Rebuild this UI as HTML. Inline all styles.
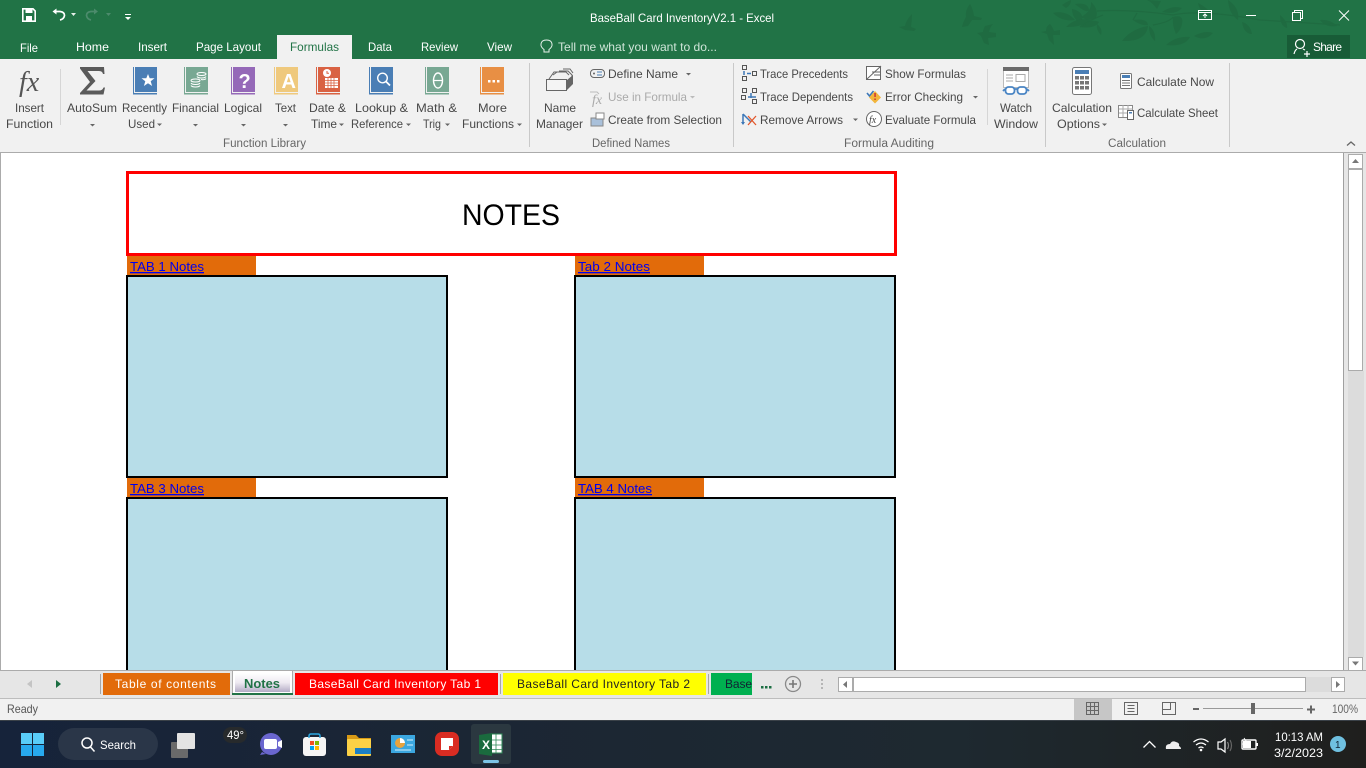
<!DOCTYPE html>
<html lang="en"><head><meta charset="utf-8"><title>BaseBall Card InventoryV2.1 - Excel</title>
<style>
html,body{margin:0;padding:0;background:#fff;overflow:hidden;width:1366px;height:768px}
svg{display:block;position:absolute;left:0;top:0}
text{font-family:"Liberation Sans",Arial,sans-serif;font-size:12px;fill:#484848}
.w text,text.w{fill:#fff}
.g{fill:#666;font-size:11.5px}
.l{fill:#0000ee;font-size:13px;text-decoration:underline}
.t{font-size:12px}
</style></head><body>
<svg width="1366" height="768" viewBox="0 0 1366 768" xmlns="http://www.w3.org/2000/svg">
<!-- title bar -->
<rect width="1366" height="59" fill="#217346"/>
<g fill="#1f6b41">
<path d="M912 14Q906 20 905 26L899 27L905 30L914 31L916 29L911 27Q912 20 912 14Z"/>
<path d="M970 4Q965 10 966 17Q963 22 962 27L968 26L972 20L981 20L982 18L974 16Q973 9 970 4Z"/>
<path d="M993 24L985 26Q983 30 983 32L977 33L981 36L984 43L989 45L988 38L996 37L996 33L989 32Q990 27 993 24Z"/>
<path d="M1050 24Q1046 26 1046 31L1041 32L1047 34L1049 40L1054 45L1053 35L1060 35L1060 30L1054 31Q1052 26 1050 24Z"/>
<path d="M1053 13Q1066 10 1075 20Q1062 22 1053 13Z"/>
<path d="M1062 5Q1068 1 1071 0Q1071 5 1066 8Z"/>
<path d="M1075 4Q1088 2 1089 10Q1087 14 1075 4Z"/>
<path d="M1072 9Q1086 12 1081 24Q1072 18 1072 9Z"/>
<path d="M1091 2Q1099 9 1096 18Q1089 22 1081 17Q1092 11 1091 2Z"/>
<path d="M1066 27Q1076 17 1090 20Q1084 27 1066 27Z"/>
<path d="M1080 27Q1090 18 1099 22Q1095 29 1080 27Z"/>
<path d="M1097 24Q1103 29 1101 35Q1096 30 1097 24Z"/>
<path d="M1133 20Q1147 18 1148 25Q1141 26 1133 20Z"/>
<path d="M1122 41Q1131 29 1148 26Q1146 42 1122 41Z"/>
<path d="M1149 26Q1156 31 1155 41Q1149 36 1149 26Z"/>
<path d="M1162 12Q1172 5 1182 8Q1176 15 1162 12Z"/>
<path d="M1173 17Q1184 14 1182 24Q1181 30 1176 34Q1172 25 1173 17Z"/>
<path d="M1166 45Q1176 36 1190 37Q1185 47 1166 45Z"/>
<path d="M1147 0L1161 1L1157 9Q1152 2 1147 0Z"/>
<path d="M1228 0Q1240 8 1238 20Q1229 14 1228 0Z"/>
<path d="M1194 36Q1205 30 1213 33Q1205 42 1194 36Z"/>
<path d="M1198 3Q1208 8 1212 15Q1201 16 1198 3Z"/>
<path d="M1242 22Q1250 24 1252 34Q1244 34 1242 22Z"/>
<path d="M1280 15Q1288 22 1287 28Q1280 26 1280 15Z"/>
<path d="M1320 20Q1330 19 1337 26Q1326 28 1320 20Z"/>
</g>
<g fill="none" stroke="#1f6b41" stroke-width="1.200"><path d="M1097 11Q1130 9 1173 15Q1200 9 1260 20L1340 25"/><path d="M1080 27Q1090 20 1103 15"/><path d="M1153 25Q1170 22 1173 17"/><path d="M1133 20L1137 13"/></g>
<!-- QAT -->
<path d="M22.800 8.800H33L35.200 11V21.200H22.800Z" fill="none" stroke="#fff" stroke-width="1.600"/><rect x="25.500" y="9" width="7" height="4" fill="#fff"/><rect x="26" y="16" width="6" height="5" fill="#fff"/>
<path d="M52.500 11.500L56.500 8.500V14.500Z" fill="#fff"/><path d="M56 11.500H60Q64.500 12 64.500 15.500Q64 19 60 20" fill="none" stroke="#fff" stroke-width="1.700"/>
<path d="M71 13H76L73.500 16Z" fill="#e6f0ea"/>
<path d="M98 11.500L94 8.500V14.500Z" fill="#4c8b6c"/><path d="M95 11.500H91Q86.500 12 86.500 15.500Q87 19 91 20" fill="none" stroke="#4c8b6c" stroke-width="1.700"/>
<path d="M106 13H111L108.500 16Z" fill="#4c8b6c"/>
<rect x="125" y="14" width="6" height="1" fill="#fff"/><path d="M125 17H131L128 20Z" fill="#fff"/>
<text x="590" y="22" textLength="184" lengthAdjust="spacingAndGlyphs" class="w">BaseBall Card InventoryV2.1 - Excel</text>
<!-- window controls -->
<g fill="none" stroke="#fff" stroke-width="1"><rect x="1198.500" y="10.500" width="13" height="9"/><path d="M1198 12.500H1212M1205 18V14M1203 16L1205 14L1207 16"/><path d="M1246 15.500H1256"/><rect x="1292.500" y="12.500" width="8" height="8"/><path d="M1294.500 12V10.500H1302.500V18.500H1301"/><path d="M1339 10.500L1349 20.500M1349 10.500L1339 20.500"/></g>
<!-- tabs -->
<g class="w">
<text x="20" y="52" textLength="18" lengthAdjust="spacingAndGlyphs">File</text>
<text x="76" y="51" textLength="33" lengthAdjust="spacingAndGlyphs">Home</text>
<text x="138" y="51" textLength="29" lengthAdjust="spacingAndGlyphs">Insert</text>
<text x="196" y="51" textLength="65" lengthAdjust="spacingAndGlyphs">Page Layout</text>
<text x="368" y="51" textLength="24" lengthAdjust="spacingAndGlyphs">Data</text>
<text x="421" y="51" textLength="37" lengthAdjust="spacingAndGlyphs">Review</text>
<text x="487" y="51" textLength="25" lengthAdjust="spacingAndGlyphs">View</text>
</g>
<text x="558" y="51" textLength="159" lengthAdjust="spacingAndGlyphs" style="fill:#cfe5d8">Tell me what you want to do...</text>
<path d="M544 49.500Q540.500 47 541 44Q541.500 40 546.500 40Q551.500 40 552 44Q552.500 47 549 49.500V52H544Z" fill="none" stroke="#e6f0ea" stroke-width="1"/>
<rect x="1287" y="35" width="63" height="23" fill="#185c37"/>
<text x="1313" y="51" textLength="29" lengthAdjust="spacing" class="w">Share</text>
<g fill="none" stroke="#fff" stroke-width="1.200"><circle cx="1300" cy="44" r="4.500"/><path d="M1294 54Q1295 50 1297 49M1303 49L1305 50M1304 54H1310M1307 51V57"/></g>
<!-- ribbon -->
<rect y="59" width="1366" height="93" fill="#f1f1f1"/>
<rect x="277" y="35" width="75" height="24" fill="#f1f1f1"/>
<text x="290" y="51" textLength="49" lengthAdjust="spacingAndGlyphs" style="fill:#217346">Formulas</text>
<rect y="152" width="1366" height="1" fill="#ababab"/>
<g fill="#d6d6d6"><rect x="60" y="69" width="1" height="56"/><rect x="987" y="69" width="1" height="56"/></g>
<g fill="#c9c9c9"><rect x="529" y="63" width="1" height="84"/><rect x="733" y="63" width="1" height="84"/><rect x="1045" y="63" width="1" height="84"/><rect x="1229" y="63" width="1" height="84"/></g>
<!-- fx -->
<text x="19" y="91" style="font:italic 28px 'Liberation Serif',serif;fill:#555">fx</text>
<path d="M80 67H104L104.500 74H103Q102.500 71 99 71H87.500L95.500 81L86.500 90.500H99Q102.500 90.500 103.500 87.500H105L103.500 94.500H80V93L90 82L80 68.500Z" fill="#5a5a5a"/>
<!-- books -->
<g>
<path d="M133 67h1v26h23v1.500h-24z" fill="#4a7eb5"/><rect x="135" y="67" width="22" height="25" fill="#4a7eb5"/>
<path d="M148 74l1.700 4.300h4.800l-3.800 3 1.400 4.700-4.100-2.800-4.100 2.800 1.400-4.700-3.800-3h4.800z" fill="#fff"/>
<path d="M184 67h1v26h23v1.500h-24z" fill="#78a893"/><rect x="186" y="67" width="22" height="25" fill="#78a893"/>
<g fill="none" stroke="#fff"><ellipse cx="195.500" cy="80.500" rx="4.500" ry="1.500"/><path d="M191 83c1 2 8 2 9 0M191 85.500c1 2 8 2 9 0"/><ellipse cx="201.500" cy="74" rx="4.500" ry="1.500"/><path d="M197 76.500c1 2 8 2 9 0M201 79.500c2 .5 4.500 0 5-1"/></g>
<path d="M231 67h1v26h23v1.500h-24z" fill="#9569b8"/><rect x="233" y="67" width="22" height="25" fill="#9569b8"/>
<text x="238.500" y="88" style="font:bold 20px 'Liberation Sans',sans-serif;fill:#fff">?</text>
<path d="M274 67h1v26h23v1.500h-24z" fill="#efc97d"/><rect x="276" y="67" width="22" height="25" fill="#efc97d"/>
<text x="281.500" y="88" style="font:bold 20px 'Liberation Sans',sans-serif;fill:#fff">A</text>
<path d="M316 67h1v26h23v1.500h-24z" fill="#d96243"/><rect x="318" y="67" width="22" height="25" fill="#d96243"/>
<circle cx="327" cy="73" r="4" fill="#fff"/><path d="M327 71v2.300h2" stroke="#d96243" fill="none"/>
<rect x="325" y="78" width="13" height="10" fill="#fff"/><path d="M325 80.500h13M325 83h13M325 85.500h13M328 78v10M331 78v10M334 78v10" stroke="#d96243" stroke-width=".8"/>
<path d="M369 67h1v26h23v1.500h-24z" fill="#4a7eb5"/><rect x="371" y="67" width="22" height="25" fill="#4a7eb5"/>
<circle cx="382.500" cy="78" r="4.800" fill="none" stroke="#fff" stroke-width="1.400"/><path d="M386 81.500l4 4" stroke="#fff" stroke-width="1.800"/>
<path d="M425 67h1v26h23v1.500h-24z" fill="#78a893"/><rect x="427" y="67" width="22" height="25" fill="#78a893"/>
<ellipse cx="438" cy="80.500" rx="4.500" ry="7.500" fill="none" stroke="#fff" stroke-width="1.400"/><path d="M433.500 80.500h9" stroke="#fff" stroke-width="1.200"/>
<path d="M480 67h1v26h23v1.500h-24z" fill="#e88f44"/><rect x="482" y="67" width="22" height="25" fill="#e88f44"/>
<g fill="#fff"><rect x="488" y="80" width="2.500" height="2.500"/><rect x="492.500" y="80" width="2.500" height="2.500"/><rect x="497" y="80" width="2.500" height="2.500"/></g>
</g>
<!-- big labels -->
<text x="15" y="112" textLength="29" lengthAdjust="spacingAndGlyphs">Insert</text>
<text x="6" y="128" textLength="47" lengthAdjust="spacingAndGlyphs">Function</text>
<text x="67" y="112" textLength="50" lengthAdjust="spacingAndGlyphs">AutoSum</text>
<text x="122" y="112" textLength="45" lengthAdjust="spacingAndGlyphs">Recently</text>
<text x="128" y="128" textLength="27" lengthAdjust="spacingAndGlyphs">Used</text>
<text x="172" y="112" textLength="47" lengthAdjust="spacingAndGlyphs">Financial</text>
<text x="224" y="112" textLength="38" lengthAdjust="spacingAndGlyphs">Logical</text>
<text x="275" y="112" textLength="21" lengthAdjust="spacingAndGlyphs">Text</text>
<text x="309" y="112" textLength="37" lengthAdjust="spacingAndGlyphs">Date &amp;</text>
<text x="311" y="128" textLength="26" lengthAdjust="spacingAndGlyphs">Time</text>
<text x="355" y="112" textLength="53" lengthAdjust="spacingAndGlyphs">Lookup &amp;</text>
<text x="351" y="128" textLength="52" lengthAdjust="spacingAndGlyphs">Reference</text>
<text x="416" y="112" textLength="41" lengthAdjust="spacingAndGlyphs">Math &amp;</text>
<text x="423" y="128" textLength="18" lengthAdjust="spacingAndGlyphs">Trig</text>
<text x="478" y="112" textLength="29" lengthAdjust="spacingAndGlyphs">More</text>
<text x="462" y="128" textLength="52" lengthAdjust="spacingAndGlyphs">Functions</text>
<g fill="#666">
<path d="M90 124h5l-2.500 2.500z"/><path d="M157 123.500h5l-2.500 2.500z"/><path d="M193 124h5l-2.500 2.500z"/><path d="M241 124h5l-2.500 2.500z"/><path d="M283 124h5l-2.500 2.500z"/><path d="M339 123.500h5l-2.500 2.500z"/><path d="M406 123.500h5l-2.500 2.500z"/><path d="M445 123.500h5l-2.500 2.500z"/><path d="M517 123.500h5l-2.500 2.500z"/><path d="M686 73h5l-2.500 2.500z"/><path d="M853 118.500h5l-2.500 2.500z"/><path d="M973 96h5l-2.500 2.500z"/><path d="M1102 123.500h5l-2.500 2.500z"/>
</g>
<path d="M690 96h5l-2.500 2.500z" fill="#bbb"/>
<text x="223" y="147" textLength="83" lengthAdjust="spacingAndGlyphs" class="g">Function Library</text>
<text x="592" y="147" textLength="78" lengthAdjust="spacingAndGlyphs" class="g">Defined Names</text>
<text x="844" y="147" textLength="90" lengthAdjust="spacingAndGlyphs" class="g">Formula Auditing</text>
<text x="1108" y="147" textLength="58" lengthAdjust="spacingAndGlyphs" class="g">Calculation</text>
<path d="M1347 145.500l4-3.500 4 3.500" fill="none" stroke="#666" stroke-width="1.300"/>
<!-- name manager -->
<g fill="none" stroke="#666"><path d="M549 79l5-7h12l3 3"/><path d="M553 75l4-3M559 71h9l4 4v6"/><path d="M563 69h7l3 4"/></g>
<rect x="546.500" y="79.500" width="20" height="11" fill="#f4f4f4" stroke="#666"/><path d="M567 80l6-5v9l-6 6z" fill="#666"/>
<text x="544" y="112" textLength="32" lengthAdjust="spacingAndGlyphs">Name</text>
<text x="536" y="128" textLength="47" lengthAdjust="spacingAndGlyphs">Manager</text>
<rect x="590.500" y="69.500" width="14" height="8" rx="3.500" fill="none" stroke="#666"/><path d="M597 72h5M597 75h5" stroke="#4a7eb5"/><circle cx="594" cy="73.500" r="1" fill="#666"/>
<text x="608" y="78" textLength="70" lengthAdjust="spacingAndGlyphs">Define Name</text>
<text x="592" y="104" style="font:italic 14px 'Liberation Serif',serif;fill:#aaa">fx</text>
<path d="M590 92h7l2 2" fill="none" stroke="#bbb"/>
<text x="608" y="101" textLength="79" lengthAdjust="spacingAndGlyphs" style="fill:#aaa">Use in Formula</text>
<rect x="591" y="118" width="12" height="8" fill="#a9c0da" stroke="#888"/><rect x="596" y="113" width="8" height="6" fill="#fff" stroke="#888"/>
<text x="608" y="124" textLength="114" lengthAdjust="spacingAndGlyphs">Create from Selection</text>
<!-- auditing -->
<g fill="none" stroke="#555"><rect x="742.500" y="65.500" width="4" height="4"/><rect x="742.500" y="76.500" width="4" height="4"/><rect x="752.500" y="71.500" width="4" height="4"/><rect x="742.500" y="88.500" width="4" height="4"/><rect x="752.500" y="99.500" width="4" height="4"/><rect x="752.500" y="88.500" width="4" height="4"/><rect x="741.500" y="95.500" width="4" height="4"/></g>
<path d="M744 71v4M747 73.500h4" stroke="#3d78b8" stroke-width="1.500"/>
<path d="M751 93v5M748 97h8" stroke="#3d78b8" stroke-width="1.500"/>
<text x="760" y="78" textLength="88" lengthAdjust="spacingAndGlyphs">Trace Precedents</text>
<text x="760" y="101" textLength="93" lengthAdjust="spacingAndGlyphs">Trace Dependents</text>
<path d="M743 114v10M743 114l8 8" stroke="#3d78b8" stroke-width="1.500" fill="none"/><path d="M748 116l8 9M756 116l-8 9" stroke="#e2572b" stroke-width="1.300"/><path d="M741 122h4l-2 3z" fill="#3d78b8"/>
<text x="760" y="124" textLength="83" lengthAdjust="spacingAndGlyphs">Remove Arrows</text>
<rect x="866.500" y="66.500" width="14" height="13" fill="#fff" stroke="#666"/><path d="M867 79l14-13M872 72h8M874 75h6" stroke="#666" fill="none"/>
<text x="885" y="78" textLength="81" lengthAdjust="spacingAndGlyphs">Show Formulas</text>
<path d="M867 93l2.500 3 4-5" stroke="#3d78b8" stroke-width="1.600" fill="none"/><path d="M875 91l6 6.500-6 6-6-6z" fill="#f2b53c"/><rect x="874.300" y="93" width="1.500" height="4" fill="#c33"/><rect x="874.300" y="98.500" width="1.500" height="1.500" fill="#c33"/>
<text x="885" y="101" textLength="78" lengthAdjust="spacingAndGlyphs">Error Checking</text>
<circle cx="874" cy="119" r="7.500" fill="#fff" stroke="#666"/><text x="869" y="123" style="font:italic 10px 'Liberation Serif',serif;fill:#444">fx</text>
<text x="885" y="124" textLength="91" lengthAdjust="spacingAndGlyphs">Evaluate Formula</text>
<!-- watch -->
<rect x="1003.500" y="67.500" width="25" height="20" fill="#fff" stroke="#bbb"/><rect x="1003" y="67" width="26" height="4" fill="#6b6b6b"/><rect x="1016" y="74.500" width="9" height="7" fill="none" stroke="#aaa"/><path d="M1006 75h7M1006 78h7M1006 81h7" stroke="#aaa"/>
<g fill="#fff" stroke="#4a85c4" stroke-width="1.800"><rect x="1005.500" y="87" width="9" height="7" rx="3"/><rect x="1017.500" y="87" width="9" height="7" rx="3"/><path d="M1014 89h4M1005 89l-2 2M1027 89l2 2"/></g>
<text x="1000" y="112" textLength="32" lengthAdjust="spacingAndGlyphs">Watch</text>
<text x="994" y="128" textLength="44" lengthAdjust="spacingAndGlyphs">Window</text>
<!-- calc -->
<rect x="1072.500" y="67.500" width="19" height="27" rx="2" fill="#fff" stroke="#777"/><rect x="1075" y="70" width="14" height="4" fill="#4a7eb5"/>
<g fill="#777"><rect x="1075" y="76" width="4" height="3.500"/><rect x="1080" y="76" width="4" height="3.500"/><rect x="1085" y="76" width="4" height="3.500"/><rect x="1075" y="81" width="4" height="3.500"/><rect x="1080" y="81" width="4" height="3.500"/><rect x="1085" y="81" width="4" height="3.500"/><rect x="1075" y="86" width="4" height="3.500"/><rect x="1080" y="86" width="4" height="3.500"/><rect x="1085" y="86" width="4" height="3.500"/></g>
<text x="1052" y="112" textLength="60" lengthAdjust="spacingAndGlyphs">Calculation</text>
<text x="1057" y="128" textLength="43" lengthAdjust="spacingAndGlyphs">Options</text>
<rect x="1120.500" y="73.500" width="11" height="15" rx="1" fill="#fff" stroke="#777"/><rect x="1122" y="75" width="8" height="3" fill="#4a7eb5"/><path d="M1122 80.500h8M1122 83h8M1122 85.500h8" stroke="#777"/>
<text x="1137" y="86" textLength="77" lengthAdjust="spacingAndGlyphs">Calculate Now</text>
<rect x="1118.500" y="105.500" width="14" height="12" fill="#fff" stroke="#888"/><path d="M1119 109h14M1119 113h14M1123 105v12M1128 105v12" stroke="#aaa"/><rect x="1127.500" y="110.500" width="6" height="9" fill="#fff" stroke="#666"/><rect x="1129" y="112" width="3" height="1.500" fill="#4a7eb5"/>
<text x="1137" y="117" textLength="81" lengthAdjust="spacingAndGlyphs">Calculate Sheet</text>
<!-- sheet -->
<rect x="0" y="153" width="1343" height="518" fill="#fff"/>
<rect x="0" y="153" width="1" height="518" fill="#ababab"/>
<rect x="1343" y="153" width="1" height="518" fill="#a0a0a0"/>
<rect x="1344" y="153" width="22" height="518" fill="#e6e6e6"/>
<rect x="1348" y="371" width="16" height="286" fill="#dcdcdc"/>
<rect x="1348.500" y="154.500" width="14" height="14" fill="#fff" stroke="#ababab"/><path d="M1352 163h7l-3.500-4z" fill="#777"/>
<rect x="1348.500" y="169.500" width="14" height="201" fill="#fff" stroke="#ababab"/>
<rect x="1348.500" y="657.500" width="14" height="13" fill="#fff" stroke="#ababab"/><path d="M1352 661.500h7l-3.500 4z" fill="#777"/>
<!-- content -->
<rect x="127.500" y="172.500" width="768" height="82" fill="#fff" stroke="#f00" stroke-width="3"/>
<text x="462" y="225" textLength="98" lengthAdjust="spacingAndGlyphs" style="font-size:30px;fill:#000">NOTES</text>
<g fill="#e26b0a"><rect x="127" y="256" width="129" height="19"/><rect x="575" y="256" width="129" height="19"/><rect x="127" y="478" width="129" height="19"/><rect x="575" y="478" width="129" height="19"/></g>
<text x="130" y="271" textLength="74" lengthAdjust="spacingAndGlyphs" class="l">TAB 1 Notes</text>
<text x="578" y="271" textLength="72" lengthAdjust="spacingAndGlyphs" class="l">Tab 2 Notes</text>
<text x="130" y="493" textLength="74" lengthAdjust="spacingAndGlyphs" class="l">TAB 3 Notes</text>
<text x="578" y="493" textLength="74" lengthAdjust="spacingAndGlyphs" class="l">TAB 4 Notes</text>
<g fill="#b7dde8" stroke="#000" stroke-width="2">
<rect x="127" y="276" width="320" height="201"/><rect x="575" y="276" width="320" height="201"/>
<rect x="127" y="498" width="320" height="200"/><rect x="575" y="498" width="320" height="200"/>
</g>
<!-- tab strip -->
<rect y="670" width="1366" height="29" fill="#e6e6e6"/>
<rect y="670" width="1366" height="1" fill="#ababab"/>
<rect y="698" width="1366" height="1" fill="#bdbdbd"/>
<path d="M32 680v8l-5-4z" fill="#c4c4c4"/><path d="M56 680v8l5-4z" fill="#1b6e42"/>
<g fill="#a6a6a6"><rect x="100" y="674" width="1" height="20"/><rect x="500" y="674" width="1" height="20"/><rect x="708" y="674" width="1" height="20"/></g>
<rect x="103" y="673" width="127" height="22" fill="#e26b0a"/>
<text x="115" y="688" textLength="101" lengthAdjust="spacing" class="t" style="fill:#fff">Table of contents</text>
<rect x="232.500" y="670.500" width="60" height="24" fill="#fff" stroke="#ababab"/>
<defs><linearGradient id="nt" x1="0" y1="0" x2="0" y2="1"><stop offset="0" stop-color="#fff"/><stop offset=".5" stop-color="#eeeaf2"/><stop offset="1" stop-color="#b4acc6"/></linearGradient>
<linearGradient id="tb" x1="0" y1="0" x2="1" y2="0"><stop offset="0" stop-color="#16233a"/><stop offset=".35" stop-color="#1b2634"/><stop offset=".7" stop-color="#1e2930"/><stop offset="1" stop-color="#1f1f1d"/></linearGradient></defs>
<rect x="235" y="673" width="55" height="19" fill="url(#nt)"/>
<rect x="232" y="693" width="61" height="2" fill="#217346"/>
<text x="244" y="688" textLength="36" lengthAdjust="spacingAndGlyphs" style="font-size:13px;font-weight:bold;fill:#217346">Notes</text>
<rect x="295" y="673" width="203" height="22" fill="#f00"/>
<text x="309" y="688" textLength="172" lengthAdjust="spacing" class="t" style="fill:#fff">BaseBall Card Inventory Tab 1</text>
<rect x="503" y="673" width="203" height="22" fill="#ff0"/>
<text x="517" y="688" textLength="173" lengthAdjust="spacing" class="t" style="fill:#222">BaseBall Card Inventory Tab 2</text>
<rect x="711" y="673" width="41" height="22" fill="#00b050"/>
<text x="725" y="688" textLength="27" lengthAdjust="spacing" class="t" style="fill:#123">Base</text>
<g fill="#1b6e42"><rect x="761" y="686" width="2.500" height="2.500"/><rect x="765" y="686" width="2.500" height="2.500"/><rect x="769" y="686" width="2.500" height="2.500"/></g>
<circle cx="793" cy="684" r="7.500" fill="none" stroke="#8a8a8a" stroke-width="1.300"/><path d="M789 684h8M793 680v8" stroke="#777" stroke-width="1.600"/>
<g fill="#b5b5b5"><rect x="821" y="679" width="2" height="2"/><rect x="821" y="683" width="2" height="2"/><rect x="821" y="687" width="2" height="2"/></g>
<rect x="838.500" y="677.500" width="14" height="14" fill="#fff" stroke="#ababab"/><path d="M847 681v7l-4-3.500z" fill="#777"/>
<rect x="853.500" y="677.500" width="452" height="14" fill="#fff" stroke="#ababab"/>
<rect x="1306" y="677" width="25" height="15" fill="#dcdcdc"/>
<rect x="1331.500" y="677.500" width="13" height="14" fill="#fff" stroke="#ababab"/><path d="M1336 681v7l4-3.500z" fill="#777"/>
<!-- status -->
<rect y="699" width="1366" height="21" fill="#f1f1f1"/>
<text x="7" y="713" textLength="31" lengthAdjust="spacingAndGlyphs" style="fill:#555">Ready</text>
<rect x="1074" y="699" width="38" height="21" fill="#c6c6c6"/>
<g fill="none" stroke="#666"><path d="M1086.500 702.500h12v12h-12zM1086.500 706.500h12M1086.500 710.500h12M1090.500 702.500v12M1094.500 702.500v12"/><rect x="1124.500" y="702.500" width="13" height="12"/><path d="M1127.500 705.500h7M1127.500 708.500h7M1127.500 711.500h7"/><path d="M1162.500 702.500h13v12h-13zM1170.500 702.500v7h-8"/></g>
<rect x="1193" y="708" width="6" height="2" fill="#666"/>
<rect x="1203" y="708" width="100" height="1" fill="#999"/>
<rect x="1251" y="703" width="4" height="11" fill="#666"/>
<path d="M1307 709.500h8M1311 705.500v8" stroke="#666" stroke-width="2"/>
<text x="1332" y="713" textLength="26" lengthAdjust="spacingAndGlyphs" style="fill:#666">100%</text>
<!-- taskbar -->
<rect y="720" width="1366" height="48" fill="url(#tb)"/>
<rect y="720" width="1366" height="1" fill="#3a4148"/>
<g><rect x="21" y="733" width="11" height="11" fill="#59cdf9"/><rect x="33" y="733" width="11" height="11" fill="#59cdf9"/><rect x="21" y="745" width="11" height="11" fill="#27a9ee"/><rect x="33" y="745" width="11" height="11" fill="#27a9ee"/></g>
<rect x="58" y="728" width="100" height="32" rx="16" fill="#2a3648"/>
<circle cx="87" cy="743" r="5" fill="none" stroke="#fff" stroke-width="1.500"/><path d="M90.500 747l4 4.500" stroke="#fff" stroke-width="1.500"/>
<text x="100" y="749" textLength="36" lengthAdjust="spacingAndGlyphs" class="w">Search</text>
<rect x="171" y="742" width="17" height="16" rx="1" fill="#6a6a6a"/><rect x="177" y="733" width="18" height="16" rx="1" fill="#e3e3e3"/>
<rect x="223" y="727" width="24" height="16" rx="8" fill="#272a2c"/>
<text x="227" y="739" textLength="17" lengthAdjust="spacingAndGlyphs" class="w">49°</text>
<circle cx="271" cy="744" r="11" fill="#6a66cf"/><path d="M262 752l-2 3 6-1z" fill="#6a66cf"/><rect x="264" y="739" width="13" height="10" rx="2" fill="#fff"/><path d="M278 742l4-2v8l-4-2z" fill="#fff"/>
<rect x="303" y="737" width="23" height="19" rx="3" fill="#f5f5f5"/><path d="M309 738v-2q0-2 2-2h7q2 0 2 2v2" fill="none" stroke="#2ba6e0" stroke-width="1.500"/>
<rect x="310" y="741" width="4" height="4" fill="#f25022"/><rect x="315" y="741" width="4" height="4" fill="#7fba00"/><rect x="310" y="746" width="4" height="4" fill="#00a4ef"/><rect x="315" y="746" width="4" height="4" fill="#ffb900"/>
<path d="M347 735h9l3 3h12v8h-24z" fill="#d89a16"/><rect x="347" y="739" width="24" height="17" rx="1" fill="#fcd146"/><rect x="355" y="748" width="16" height="6" fill="#1c7fc4"/>
<rect x="391" y="735" width="24" height="18" fill="#3ba7e0"/><circle cx="400" cy="743" r="5" fill="#e8a33d"/><path d="M400 743v-5a5 5 0 0 1 5 5z" fill="#fff"/><path d="M407 740h6M407 745h6M395 750h16" stroke="#d7f0fb"/>
<rect x="435" y="732" width="24" height="24" rx="7" fill="#d92c22"/><path d="M441 738h12v8l-4 4h-8z" fill="#fff"/><path d="M449 750v-4h4z" fill="#d92c22"/>
<rect x="471" y="724" width="40" height="40" rx="3" fill="#2b3840"/>
<rect x="490" y="734" width="12" height="19" fill="#fff" stroke="#2f8a58"/><path d="M490 740h12M490 745h12M490 749.500h12M496 734v19" stroke="#2f8a58" stroke-width=".8"/>
<path d="M479 735l13-2v23l-13-2z" fill="#1a6b3e"/>
<text x="482" y="749" style="font:bold 12px 'Liberation Sans',sans-serif;fill:#fff">X</text>
<rect x="483" y="760" width="16" height="3" rx="1.500" fill="#7cc4e6"/>
<!-- tray -->
<path d="M1143.500 747.500l6-6 6 6" fill="none" stroke="#fff" stroke-width="1.300"/>
<path d="M1166 749q-1-5 4-5q2-4 6-2q4 1 3 4q2 1 2 3z" fill="#eee"/>
<g fill="none" stroke="#fff" stroke-width="1.200"><path d="M1193.500 742q7.500-6 15 0M1196 745q5-4 10 0M1198.500 748q2.500-2 5 0"/><path d="M1218 742h3l4-3v13l-4-3h-3z"/><path d="M1227.500 742q2 3.500 0 7" stroke="#888"/><path d="M1230 740q3 5.500 0 11" stroke="#666"/></g>
<circle cx="1201" cy="750" r="1.300" fill="#fff"/>
<rect x="1242" y="740" width="14" height="9" rx="1" fill="none" stroke="#fff" stroke-width="1.400"/><rect x="1256.500" y="743" width="1.500" height="3" fill="#fff"/><path d="M1244 738l2 3-3 3h3" stroke="#fff" fill="none"/><rect x="1243" y="741" width="8" height="7" fill="#fff"/>
<text x="1275" y="741" textLength="48" lengthAdjust="spacingAndGlyphs" class="w">10:13 AM</text>
<text x="1274" y="757" textLength="49" lengthAdjust="spacingAndGlyphs" class="w">3/2/2023</text>
<circle cx="1338" cy="744" r="8" fill="#6fc0e0"/>
<text x="1335" y="748" style="font-size:10px;fill:#123">1</text>
</svg>
</body></html>
